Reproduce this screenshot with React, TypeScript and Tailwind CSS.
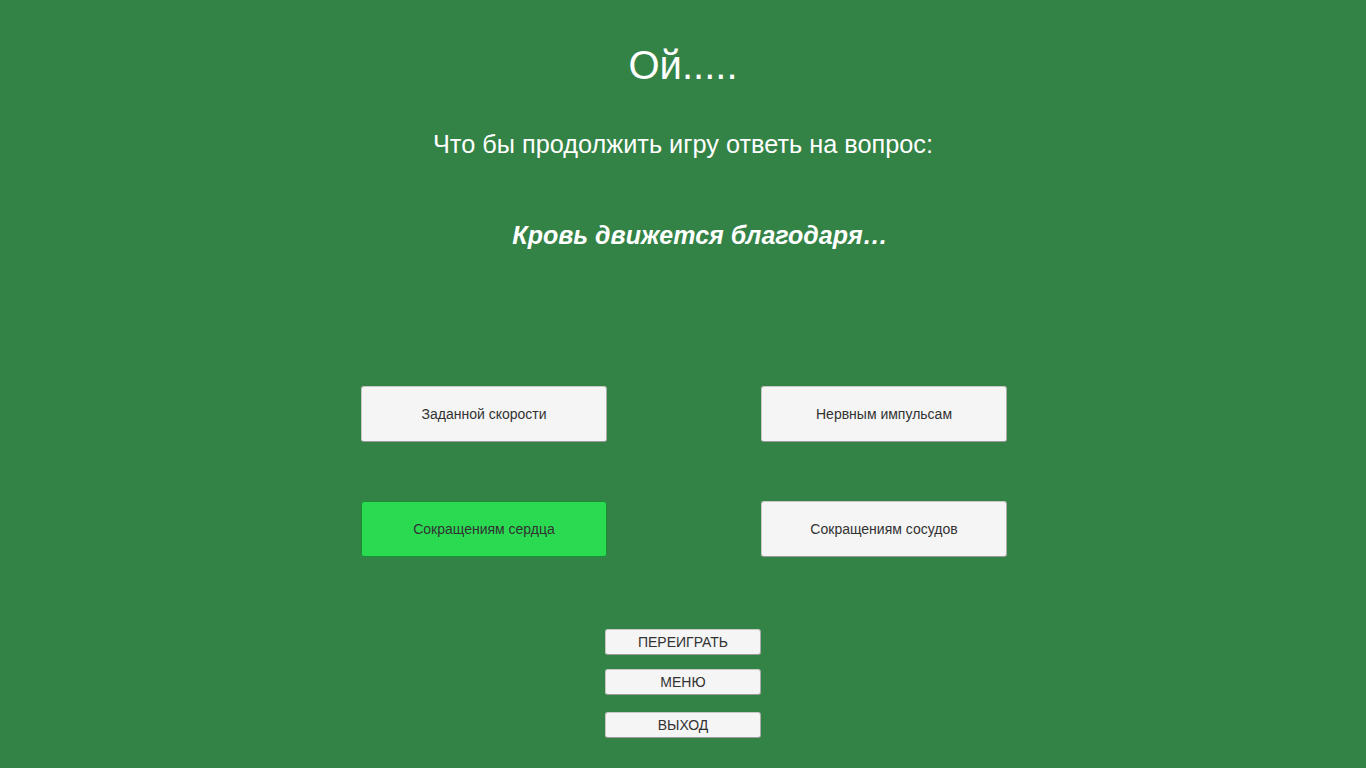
import React from 'react';

const answers = [
  { text: 'Заданной скорости', correct: false },
  { text: 'Нервным импульсам', correct: false },
  { text: 'Сокращениям сердца', correct: true },
  { text: 'Сокращениям сосудов', correct: false },
];

export default function App() {
  return (
    <div
      className="w-full h-[768px] overflow-hidden bg-[#338246] flex flex-col items-center text-white"
      style={{ fontFamily: '"Liberation Sans", Arial, sans-serif' }}
    >
      <h1 className="mt-[45px] text-[40px] leading-[40px] font-normal">Ой.....</h1>

      <p className="mt-[47px] text-[25.3px] leading-[25px]">Что бы продолжить игру ответь на вопрос:</p>

      <p className="mt-[66px] pl-[34px] text-[25px] leading-[25px] font-bold italic">Кровь движется благодаря…</p>

      <div className="mt-[138px] ml-[2px] grid grid-cols-[246px_246px] gap-x-[154px] gap-y-[59px] w-[646px]">
        {answers.map((a) => (
          <button
            key={a.text}
            className={`h-[56px] rounded-[3px] text-[14px] text-[#323232] border ${
              a.correct
                ? 'bg-[#2adb52] border-[#1b8f37]'
                : 'bg-[#f5f5f5] border-[#c8c8c8] border-b-[#9a9a9a] border-r-[#aaaaaa]'
            }`}
          >
            {a.text}
          </button>
        ))}
      </div>

      <div className="mt-[72px] flex flex-col items-center">
        <SmallButton label="ПЕРЕИГРАТЬ" />
        <div className="h-[14px]" />
        <SmallButton label="МЕНЮ" />
        <div className="h-[17px]" />
        <SmallButton label="ВЫХОД" />
      </div>
    </div>
  );
}

function SmallButton({ label }: { label: string }) {
  return (
    <button className="w-[156px] h-[26px] rounded-[3px] bg-[#f5f5f5] border border-[#c8c8c8] border-b-[#9a9a9a] border-r-[#aaaaaa] text-[14px] leading-none text-[#323232]">
      {label}
    </button>
  );
}
